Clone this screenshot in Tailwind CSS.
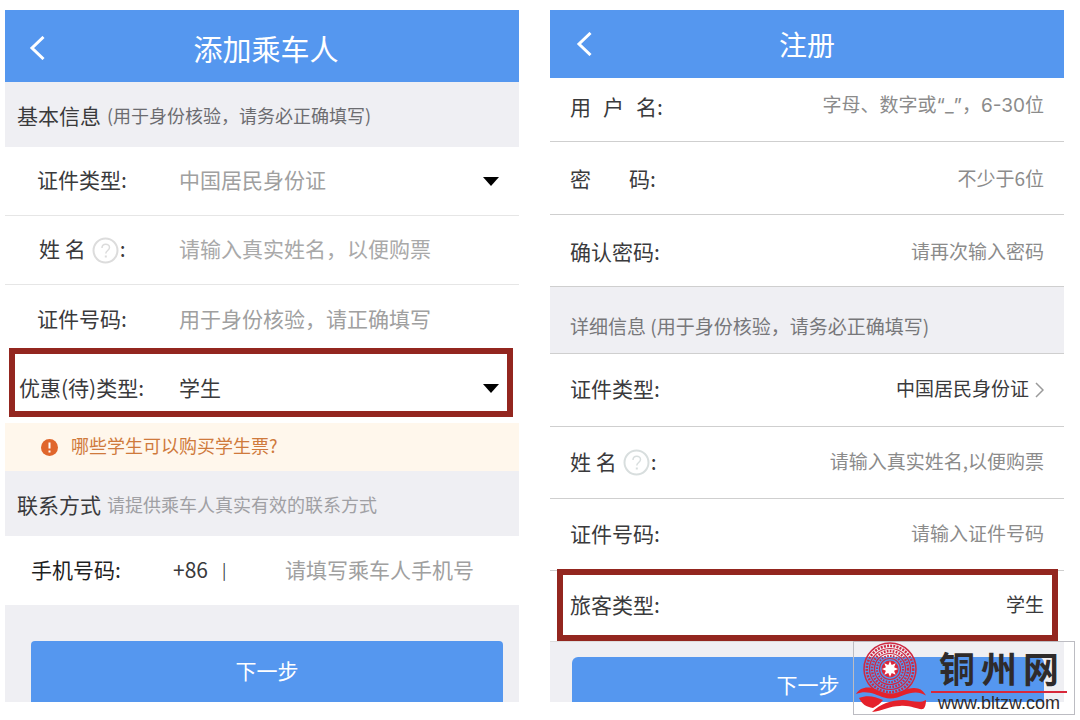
<!DOCTYPE html>
<html lang="zh-CN">
<head>
  <meta charset="UTF-8">
  <title>添加乘车人 / 注册</title>
  <meta name="viewport" content="width=device-width, initial-scale=1.0">
  <script src="https://cdn.jsdelivr.net/npm/@tailwindcss/browser@4"></script>
</head>
<body class="relative min-h-screen bg-white font-['Noto_Sans_CJK_SC',sans-serif] text-[21px] leading-8 text-[#3a3a3c]">

  <main class="grid grid-cols-2 gap-[31px] pt-[10px] pr-4 pb-[18px] pl-[5px]">

    <!-- ADD PASSENGER -->
    <form class="flex flex-col">
      <header class="relative flex h-[72px] items-center justify-center bg-[#5597ef] pt-1 pl-2 text-white">
        <a href="#" aria-label="返回" class="absolute left-6">
          <svg class="h-6 w-4" viewBox="0 0 16 24" fill="none" stroke="currentColor" stroke-width="3"><path d="M14.500 1 3 12 14.500 23"/></svg>
        </a>
        <h1 class="text-[29px] leading-10">添加乘车人</h1>
      </header>

      <h2 class="flex h-[65px] items-center gap-[6px] bg-[#efeff3] pl-3">
        基本信息 <span class="text-lg text-[#6c6c70]">(用于身份核验，请务必正确填写)</span>
      </h2>

      <div class="flex h-[69px] items-center border-b border-[#e6e6e6] pb-1">
        <label for="id_type" class="w-[174px] pl-8">证件类型:</label>
        <select id="id_type" class="flex-1 appearance-none text-[#a0a0a0]"><option>中国居民身份证</option></select>
        <svg class="mt-1 mr-5 h-[9px] w-4" viewBox="0 0 16 9"><path d="M0 0h16L8 9z"/></svg>
      </div>

      <div class="flex h-[69px] items-center border-b border-[#e6e6e6] pb-1">
        <label for="name" class="flex w-[174px] items-center pl-[34px]">姓 名
          <svg class="mt-1 mr-px ml-[6px] h-[27px] w-[27px]" viewBox="0 0 27 27" fill="none" stroke="#dcdcdc" stroke-width="2"><circle cx="13.500" cy="13.500" r="12"/><path d="M10 11c0-5 7.500-5 7.500-.5 0 3-3.700 3-3.700 6" stroke-width="1.500"/><path d="M13.800 18.500v2"/></svg>:
        </label>
        <input id="name" type="text" placeholder="请输入真实姓名，以便购票" class="min-w-0 flex-1 placeholder:text-[#a9a9a9]">
      </div>

      <div class="flex h-[69px] items-center pb-1">
        <label for="id_no" class="w-[174px] pl-8">证件号码:</label>
        <input id="id_no" type="text" placeholder="用于身份核验，请正确填写" class="min-w-0 flex-1 placeholder:text-[#a0a0a0]">
      </div>

      <div class="relative flex h-[69px] items-center pb-1">
        <div class="pointer-events-none absolute -top-[6px] right-[6px] bottom-[6px] left-1 border-[6px] border-[#93261f]"></div>
        <label for="discount" class="w-[174px] pl-[14px]">优惠(待)类型:</label>
        <select id="discount" class="flex-1 appearance-none"><option>学生</option></select>
        <svg class="mt-1 mr-5 h-[9px] w-4" viewBox="0 0 16 9"><path d="M0 0h16L8 9z"/></svg>
      </div>

      <a href="#" class="flex h-12 items-center gap-[13px] bg-[#fff7ec] pl-9 text-lg text-[#cf7a3c]">
        <svg class="h-[17px] w-[17px]" viewBox="0 0 17 17"><circle cx="8.500" cy="8.500" r="8.500" fill="#e0662c"/><path d="M8.500 3.500v6M8.500 11.500v2" stroke="#fff" stroke-width="2"/></svg>
        <span class="pb-1">哪些学生可以购买学生票?</span>
      </a>

      <h2 class="flex h-[65px] items-center gap-[6px] bg-[#efeff3] pl-3">
        联系方式 <span class="text-lg text-[#a0a0a4]">请提供乘车人真实有效的联系方式</span>
      </h2>

      <div class="flex h-[69px] items-center pb-1">
        <label for="phone" class="w-[168px] pl-[26px] text-[#1f1f1f]">手机号码:</label>
        <span class="w-[49px]">+86</span>
        <span class="w-[63px] text-base">|</span>
        <input id="phone" type="tel" placeholder="请填写乘车人手机号" class="min-w-0 flex-1 placeholder:text-[#a0a0a0]">
      </div>

      <div class="flex flex-1 bg-[#efeff3] px-[26px] pt-9 pr-4">
        <button type="button" class="h-[61px] w-full rounded-t bg-[#5597ef] pb-1 text-white">下一步</button>
      </div>
    </form>

    <!-- REGISTER -->
    <form class="flex flex-col">
      <header class="relative flex h-[68px] items-center justify-center bg-[#5597ef] text-white">
        <a href="#" aria-label="返回" class="absolute left-[26px]">
          <svg class="h-6 w-4" viewBox="0 0 16 24" fill="none" stroke="currentColor" stroke-width="3"><path d="M14.500 1 3 12 14.500 23"/></svg>
        </a>
        <h1 class="text-[28px] leading-10">注册</h1>
      </header>

      <div class="flex h-16 items-center border-b border-[#cfcfcf] px-5 pb-2">
        <label for="user" class="flex gap-3"><span>用</span><span>户</span><span>名:</span></label>
        <input id="user" type="text" placeholder="字母、数字或“_”，6-30位" class="min-w-0 flex-1 text-right font-['Inter','Noto_Sans_CJK_SC',sans-serif] text-[19px] placeholder:text-[#8b8b8b]">
      </div>

      <div class="flex h-[73px] items-center border-b border-[#cfcfcf] px-5">
        <label for="pwd" class="flex gap-[38px]"><span>密</span><span>码:</span></label>
        <input id="pwd" type="password" placeholder="不少于6位" class="min-w-0 flex-1 text-right text-[19px] placeholder:text-[#8b8b8b]">
      </div>

      <div class="flex h-[72px] items-center border-b border-[#cfcfcf] px-5">
        <label for="pwd2">确认密码:</label>
        <input id="pwd2" type="password" placeholder="请再次输入密码" class="min-w-0 flex-1 text-right text-[19px] placeholder:text-[#8b8b8b]">
      </div>

      <h2 class="flex h-[67px] items-center border-b border-[#cfcfcf] bg-[#efeff3] px-5 pt-3 text-[19px] text-[#77777a]">详细信息 (用于身份核验，请务必正确填写)</h2>

      <div class="flex h-[73px] items-center border-b border-[#cfcfcf] px-5 pb-1">
        <label for="reg_id_type">证件类型:</label>
        <select id="reg_id_type" class="flex-1 appearance-none text-[19px] [text-align-last:right]"><option>中国居民身份证</option></select>
        <svg class="mt-1 ml-[6px] h-4 w-[9px]" viewBox="0 0 9 16" fill="none" stroke="#9a9a9a" stroke-width="1.500"><path d="M1 1l7 7-7 7"/></svg>
      </div>

      <div class="flex h-[72px] items-center border-b border-[#cfcfcf] px-5 pb-1">
        <label for="reg_name" class="flex items-center">姓 名
          <svg class="mt-1 mr-px ml-[6px] h-[27px] w-[27px]" viewBox="0 0 27 27" fill="none" stroke="#d8dede" stroke-width="2"><circle cx="13.500" cy="13.500" r="12"/><path d="M10 11c0-5 7.500-5 7.500-.5 0 3-3.700 3-3.700 6" stroke-width="1.500"/><path d="M13.800 18.500v2"/></svg>:
        </label>
        <input id="reg_name" type="text" placeholder="请输入真实姓名,以便购票" class="min-w-0 flex-1 text-right text-[19px] placeholder:text-[#8b8b8b]">
      </div>

      <div class="flex h-[72px] items-center border-b border-[#cfcfcf] px-5 pb-1">
        <label for="reg_id_no">证件号码:</label>
        <input id="reg_id_no" type="text" placeholder="请输入证件号码" class="min-w-0 flex-1 text-right text-[19px] placeholder:text-[#8b8b8b]">
      </div>

      <div class="relative flex h-[71px] items-center border-b border-[#dddddd] px-5 pb-1">
        <div class="pointer-events-none absolute -top-[2px] right-[6px] bottom-0 left-[7px] border-[6px] border-[#93261f]"></div>
        <label for="passenger">旅客类型:</label>
        <select id="passenger" class="flex-1 appearance-none text-[19px] [text-align-last:right]"><option>学生</option></select>
      </div>

      <div class="flex flex-1 bg-[#efeff3] pt-[15px] pr-5 pl-[22px]">
        <button type="button" class="h-[45px] w-full rounded-t-md bg-[#5597ef] pt-2 text-white">下一步</button>
      </div>
    </form>
  </main>

  <!-- SITE BADGE -->
  <a href="http://www.bltzw.com" class="absolute right-[5px] bottom-[5px] flex h-[74px] w-[222px] gap-1 border border-[#bcbcc2] pl-px text-[#2f2b2b]">
    <svg class="h-[72px] w-[72px]" viewBox="0 0 72 72" fill="none">
      <g stroke="#cf2942">
        <circle cx="35" cy="27" r="26" stroke-width="1.500"/>
        <circle cx="35" cy="27" r="23.200" stroke-width="2.500" stroke-dasharray="2 1.200"/>
        <circle cx="35" cy="27" r="20.500" stroke-width="1.200"/>
        <circle cx="35" cy="27" r="18" stroke-width="2.500" stroke-dasharray="1.700 1.300"/>
        <circle cx="35" cy="27" r="15.500" stroke-width="1.200"/>
        <circle cx="35" cy="27" r="13" stroke-width="2" stroke-dasharray="1.600 1.300"/>
        <circle cx="35" cy="27" r="10.500" stroke-width="1.200"/>
      </g>
      <circle cx="35" cy="27" r="8.500" fill="#d9283c"/>
      <path fill="#fff" d="M35 19l1.700 3.900 4-1.600-1.600 4L43 27l-3.900 1.700 1.600 4-4-1.600L35 35l-1.700-3.900-4 1.600 1.600-4L27 27l3.900-1.700-1.600-4 4 1.600z"/>
      <g fill="#e4212b">
        <path d="M1 52C5 45 13 44 20 47c6 2.500 11 5 17 4.500C46 51 54 44 63 46.500c4 1 6 4 8 7-8-5-15-3-22-.5-6 2.500-13 5-20 2.500-9-3-17-8-28-3.500z"/>
        <path d="M4 56c8-3 15-2 24 2-2 3-6 6-10 8-7-1-11-4-14-10z"/>
        <path d="M17 70c8-8 19-12 31-12 8 0 16 4 23 0 0 4-1 8-3 9-5 1-12-4-23-3-11 0-18 5-28 6z"/>
      </g>
    </svg>
    <div class="flex flex-1 flex-col pr-[7px]">
      <div class="flex h-[51px] items-center justify-between border-b-2 border-[#d8283a] px-2 text-4xl font-bold"><span>铜</span><span>州</span><span>网</span></div>
      <span class="text-center font-['Liberation_Sans',sans-serif] text-lg leading-5">www.bltzw.com</span>
    </div>
  </a>

</body>
</html>
